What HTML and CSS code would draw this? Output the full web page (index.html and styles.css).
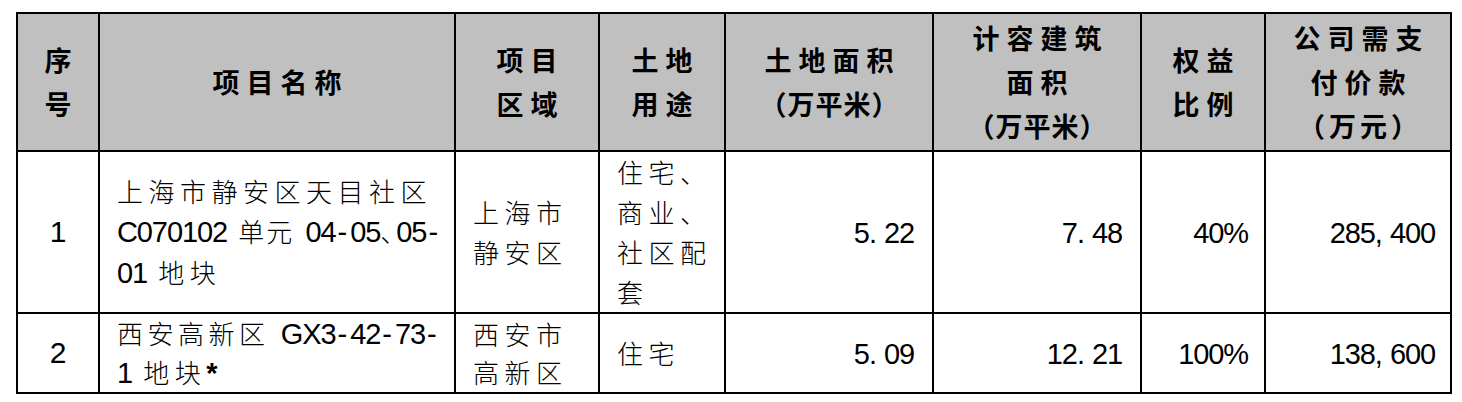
FILE: index.html
```html
<!DOCTYPE html>
<html lang="zh-CN">
<head>
<meta charset="utf-8">
<title>项目列表</title>
<link rel="stylesheet" href="styles.css">
</head>
<body>
<div class="page">
<table class="grid">
  <thead>
    <tr>
      <th class="c1">序<br>号</th>
      <th class="c2">项目名称</th>
      <th class="c3">项目<br>区域</th>
      <th class="c4">土地<br>用途</th>
      <th class="c5">土地面积<br><span class="unit">（万平米）</span></th>
      <th class="c6">计容建筑<br>面积<br><span class="unit">（万平米）</span></th>
      <th class="c7">权益<br>比例</th>
      <th class="c8">公司需支<br>付价款<br><span class="unit2">（万元）</span></th>
    </tr>
  </thead>
  <tbody>
    <tr class="r1">
      <td class="seq">1</td>
      <td class="txt">上海市静安区天目社区<br><span class="n">C070102</span> <span class="tight">单元</span> <span class="n">04<span class="hy">-</span>05</span><span class="half">、</span><span class="n">05<span class="hy">-</span></span><br><span class="n">01</span> 地块</td>
      <td class="txt">上海市<br>静安区</td>
      <td class="txt">住宅、<br>商业、<br>社区配<br>套</td>
      <td class="num"><span class="n">5<span class="pt">.</span>22</span></td>
      <td class="num"><span class="n">7<span class="pt">.</span>48</span></td>
      <td class="num pct"><span class="n">40%</span></td>
      <td class="num last"><span class="n">285<span class="pt">,</span>400</span></td>
    </tr>
    <tr class="r2">
      <td class="seq">2</td>
      <td class="txt"><span class="mid">西安高新区</span> <span class="n">GX3<span class="hy">-</span>42<span class="hy">-</span>73<span class="hy">-</span></span><br><span class="n">1</span> 地块<span class="n star">*</span></td>
      <td class="txt">西安市<br>高新区</td>
      <td class="txt">住宅</td>
      <td class="num"><span class="n">5<span class="pt">.</span>09</span></td>
      <td class="num"><span class="n">12<span class="pt">.</span>21</span></td>
      <td class="num pct"><span class="n">100%</span></td>
      <td class="num last"><span class="n">138<span class="pt">,</span>600</span></td>
    </tr>
  </tbody>
</table>
</div>
</body>
</html>
```

FILE: styles.css
```css
html, body {
  margin: 0;
  padding: 0;
  background: #ffffff;
}

.page {
  padding: 12px 0 0 16px;
}

.grid {
  border-collapse: separate;
  border-spacing: 0;
  table-layout: fixed;
  width: 1436px;
  border-top: 2px solid #000;
  border-left: 2px solid #000;
  color: #000;
}

.grid th,
.grid td {
  box-sizing: border-box;
  border-right: 2px solid #000;
  border-bottom: 2px solid #000;
  padding: 0;
  vertical-align: middle;
}

.grid th {
  background: #c0c0c0;
  height: 138px;
  font-family: "Noto Sans CJK SC", sans-serif;
  font-weight: 700;
  font-size: 27px;
  line-height: 44px;
  letter-spacing: 7px;
  text-align: center;
  padding-left: 7px;
}

.grid th .unit {
  letter-spacing: 1px;
  margin-left: -6px;
}

.grid th .unit2 {
  letter-spacing: 4px;
  margin-left: -3px;
}

.c1 { width: 82px; }
.c2 { width: 356px; }
.c3 { width: 144px; }
.c4 { width: 126px; }
.c5 { width: 208px; }
.c6 { width: 208px; }
.c7 { width: 124px; }
.c8 { width: 186px; }

.grid td {
  font-family: "Noto Sans CJK SC", sans-serif;
  font-weight: 300;
  font-size: 26px;
  line-height: 40px;
  letter-spacing: 5.5px;
  white-space: nowrap;
}

.r2 td {
  line-height: 38px;
}

.grid td.txt {
  text-align: left;
  padding-left: 17px;
}

.grid td.seq {
  text-align: center;
  font-family: "Liberation Sans", sans-serif;
  font-weight: 400;
  font-size: 30px;
  letter-spacing: 0;
}

.grid td.num {
  text-align: right;
  padding-right: 18px;
}

.grid td.pct {
  padding-right: 16px;
}

.grid td.last {
  padding-right: 15px;
}

.n {
  font-family: "Liberation Sans", sans-serif;
  font-weight: 400;
  font-size: 29px;
  letter-spacing: -1.1px;
}

.pt {
  letter-spacing: 7px;
}

.hy {
  letter-spacing: 0;
  padding: 0 3px 0 2px;
}

.tight {
  letter-spacing: 2px;
}

.mid {
  letter-spacing: 4.5px;
}

.half {
  letter-spacing: -10px;
}

.star {
  font-weight: 700;
}
```
